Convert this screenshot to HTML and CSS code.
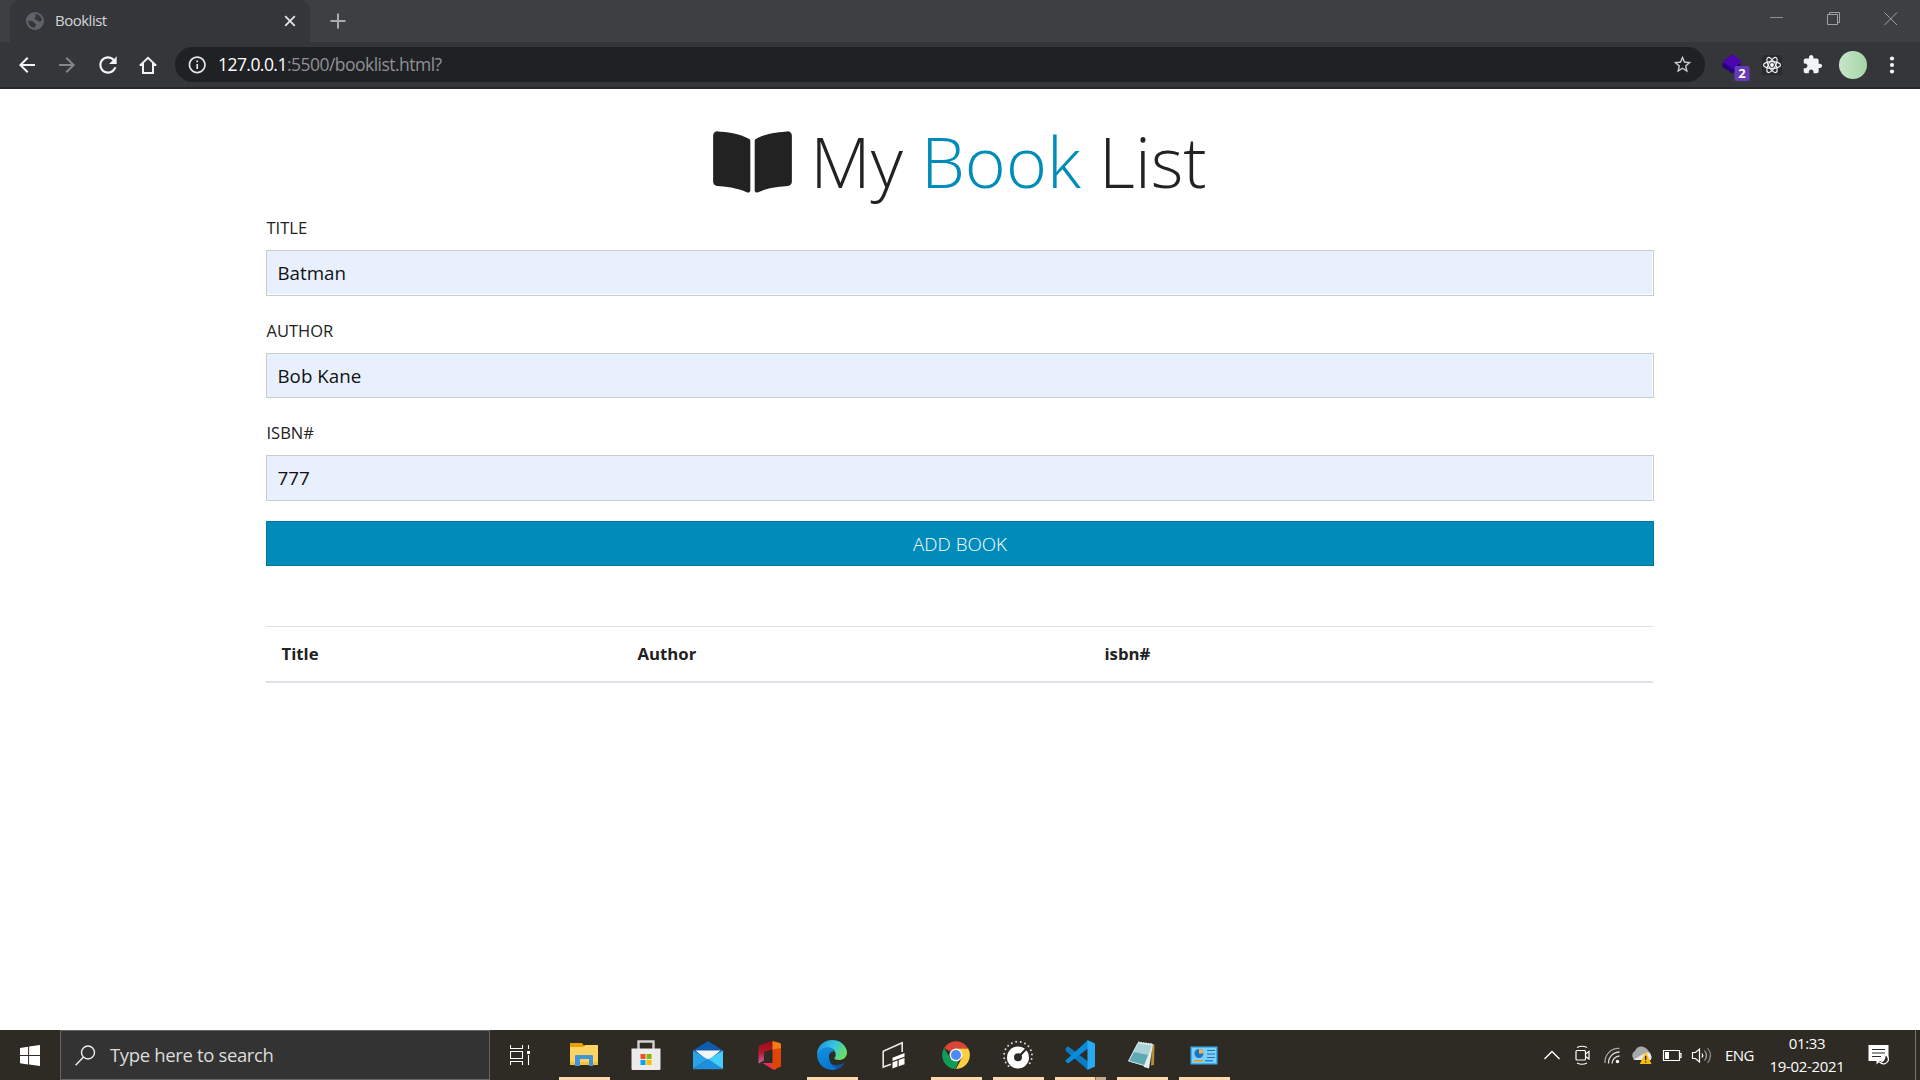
FILE: index.html
```html
<!DOCTYPE html>
<html lang="en">
<head>
<meta charset="utf-8">
<title>Booklist</title>
<link rel="stylesheet" href="styles.css">
</head>
<body>
<div class="screen">
  <header class="tabstrip">
    <div class="tab">
      <svg class="globe" width="18" height="18" viewBox="0 0 18 18"><circle cx="9" cy="9" r="9" fill="#5f6368"/><path d="M9 2c3.900 0 6.600 3 6.900 6.200-1.200 1-2.400 1.700-3.800 1-.8-.4-.6-1.300-1.600-1.400-1.500-.1-2.200-1-1.800-2.100.3-1 1.500-.8 1.300-1.900C9.900 3 9.300 2.600 9 2zM2.100 8.600c1.700.5 3.700.3 4.900 1 1 .6.800 1.500 1.900 1.800 1.300.3 1.500 1.200.8 2.100-.5.700-.9 1-1 2.400C4.900 15.700 2.100 12.700 2.100 8.600z" fill="#35363a"/></svg>
      <span class="tab-title">Booklist</span>
      <svg class="tab-close" width="12" height="12" viewBox="0 0 12 12"><path d="M1.200 1.200l9.600 9.600M10.800 1.200l-9.600 9.600" stroke="#dfe1e5" stroke-width="1.900"/></svg>
    </div>
    <svg class="newtab" width="16" height="16" viewBox="0 0 16 16"><path d="M8 .5v15M.5 8h15" stroke="#a9acaf" stroke-width="2"/></svg>
    <div class="winctl">
      <svg width="14" height="14" viewBox="0 0 14 14"><path d="M0 5.500h13" stroke="#8b8e90"/></svg>
      <svg width="14" height="14" viewBox="0 0 14 14"><path d="M.5 2.500h10v10H.5zM2.500 2.500v-2h10v10h-2" fill="none" stroke="#a0a3a5"/></svg>
      <svg width="14" height="14" viewBox="0 0 14 14"><path d="M.5.500l12.500 12.500M13 .5L.5 13" stroke="#a0a3a5"/></svg>
    </div>
  </header>
  <nav class="toolbar">
    <div class="navicons">
      <svg width="24" height="24" viewBox="0 0 24 24"><path fill="#f1f3f4" d="M20 11H7.830l5.590-5.590L12 4l-8 8 8 8 1.410-1.410L7.830 13H20z"/></svg>
      <svg width="24" height="24" viewBox="0 0 24 24"><path fill="#85868a" d="M12 4l-1.410 1.410L16.170 11H4v2h12.170l-5.580 5.590L12 20l8-8z"/></svg>
      <svg width="26" height="26" viewBox="0 0 24 24"><path fill="#f1f3f4" d="M17.650 6.350C16.200 4.900 14.210 4 12 4c-4.420 0-7.990 3.580-7.990 8s3.570 8 7.990 8c3.730 0 6.840-2.550 7.730-6h-2.080c-.82 2.330-3.040 4-5.650 4-3.310 0-6-2.690-6-6s2.690-6 6-6c1.660 0 3.140.69 4.220 1.780L13 11h7V4l-2.350 2.350z"/></svg>
      <svg class="home" width="24" height="24" viewBox="0 0 24 24"><path fill="none" stroke="#f1f3f4" stroke-width="2" d="M7 10v10h10V10M3.800 12.600L12 4.800l8.200 7.800M4.500 12H7M17 12h2.500"/></svg>
    </div>
    <div class="omnibox">
      <svg width="20" height="20" viewBox="2 2 20 20"><path fill="#e3e5e8" d="M11 7h2v2h-2zm0 4h2v6h-2zm1-9C6.480 2 2 6.480 2 12s4.480 10 10 10 10-4.480 10-10S17.520 2 12 2zm0 18c-4.410 0-8-3.590-8-8s3.590-8 8-8 8 3.590 8 8-3.590 8-8 8z" transform="translate(1.900 1.500) scale(.86)"/></svg>
      <span class="url"><b class="host">127.0.0.1</b><span class="path">:5500/booklist.html?</span></span>
      <svg class="star" width="21" height="21" viewBox="0 0 24 24"><path fill="#c9cccf" d="M22 9.240l-7.190-.62L12 2 9.190 8.630 2 9.240l5.460 4.730L5.820 21 12 17.270 18.180 21l-1.630-7.030L22 9.240zM12 15.400l-3.760 2.270 1-4.280-3.320-2.880 4.380-.38L12 6.100l1.710 4.040 4.380.38-3.320 2.880 1 4.280L12 15.400z"/></svg>
    </div>
    <div class="exts">
      <svg width="30" height="30" viewBox="0 0 30 30"><path fill="#25027e" d="M2.500 11.500L13 4.500l9 10-9.500 7L2.500 15z"/><path fill="#4c05ae" d="M12.500 2L22 9.500 12.500 17 2.500 9.500z"/><rect x="14.500" y="14" width="15" height="15" rx="2" fill="#673ab7"/><text x="22" y="26" class="badge">2</text></svg>
      <svg width="20" height="20" viewBox="0 0 20 20"><rect width="20" height="20" rx="2" fill="#2a2b2e"/><g fill="none" stroke="#f1f3f4" stroke-width="1.150"><ellipse cx="10" cy="10" rx="8.500" ry="3.400"/><ellipse cx="10" cy="10" rx="8.500" ry="3.400" transform="rotate(60 10 10)"/><ellipse cx="10" cy="10" rx="8.500" ry="3.400" transform="rotate(120 10 10)"/></g><circle cx="10" cy="10" r="1.900" fill="#fff"/></svg>
      <svg width="21" height="21" viewBox="0 0 24 24"><path fill="#f1f3f4" d="M20.500 11H19V7c0-1.100-.9-2-2-2h-4V3.500C13 2.120 11.880 1 10.500 1S8 2.120 8 3.500V5H4c-1.100 0-1.990.9-1.990 2v3.800H3.500c1.490 0 2.700 1.210 2.700 2.700s-1.210 2.700-2.700 2.700H2V20c0 1.100.9 2 2 2h3.800v-1.500c0-1.490 1.210-2.700 2.700-2.700s2.700 1.210 2.700 2.700V22H17c1.100 0 2-.9 2-2v-4h1.500c1.380 0 2.500-1.120 2.500-2.500S21.880 11 20.500 11z"/></svg>
      <span class="avatar"></span>
      <svg width="6" height="18" viewBox="0 0 6 18"><g fill="#f1f3f4"><circle cx="3" cy="2.500" r="2.100"/><circle cx="3" cy="9" r="2.100"/><circle cx="3" cy="15.500" r="2.100"/></g></svg>
    </div>
  </nav>

  <main class="page">
    <div class="container">
      <h1 class="brand"><svg class="book" width="79" height="70" viewBox="0 0 576 512"><path fill="#222" d="M542.220 32.050c-54.800 3.110-163.720 14.430-230.960 55.590-4.640 2.840-7.270 7.890-7.270 13.170v363.870c0 11.550 12.630 18.850 23.280 13.490 69.180-34.820 169.230-44.320 218.700-46.920 16.890-.89 30.020-14.430 30.020-30.660V62.750c.01-17.710-15.350-31.740-33.770-30.700zM264.730 87.640C197.500 46.480 88.580 35.170 33.780 32.050 15.360 31.010 0 45.040 0 62.750V400.600c0 16.240 13.130 29.780 30.020 30.660 49.490 2.600 149.590 12.110 218.770 46.950 10.620 5.350 23.210-1.940 23.210-13.460V100.630c0-5.290-2.620-10.140-7.270-12.990z"/></svg><span>My <span class="accent">Book</span> List</span></h1>
      <form class="form">
        <label class="label" for="title">Title</label>
        <input class="field" id="title" value="Batman">
        <label class="label" for="author">Author</label>
        <input class="field field-short" id="author" value="Bob Kane">
        <label class="label" for="isbn">ISBN#</label>
        <input class="field" id="isbn" value="777">
        <button class="submit" type="button">Add Book</button>
      </form>
      <div class="table">
        <span>Title</span><span>Author</span><span>isbn#</span>
      </div>
    </div>
  </main>

  <footer class="taskbar">
    <div class="start"><svg width="20" height="21" viewBox="0 0 20 21"><path fill="#fff" d="M0 2.900l8.100-1.100v8.300H0zM9.100 1.600L20 0v10.100H9.100zM0 11.100h8.100v8.300L0 18.200zM9.100 11.100H20V21L9.100 19.500z"/></svg></div>
    <div class="search">
      <svg width="21" height="21" viewBox="0 0 21 21"><circle cx="13" cy="7.500" r="6.500" fill="none" stroke="#f0f0f0" stroke-width="1.400"/><path d="M8.300 12.200L.6 20.300" stroke="#f0f0f0" stroke-width="1.400"/></svg>
      <span class="search-text">Type here to search</span>
    </div>
    <div class="cell"><svg width="21" height="20" viewBox="0 0 21 20"><g fill="none" stroke="#fff"><path d="M.5 0v3.500h12V0M.5 20v-3.500h12V20M.5 6.500h12v7H.5zM18.500 0v4M18.500 10v10" stroke-width="1.100"/></g><path fill="#fff" d="M17 6h3v3h-3z"/></svg></div>
    <div class="app running"><svg width="30" height="30" viewBox="0 0 30 30"><path fill="#e5a100" d="M1 3h12l2 2.500V10H1z"/><path fill="#fdd462" d="M1 7h13l2-2h13v20H1z"/><path fill="#f5c13d" d="M1 22h28v3H1z"/><path fill="#4095d9" d="M6 16a1 1 0 011-1h16a1.500 1.500 0 011 1v10h-4v-7h-9v7H6z"/></svg></div>
    <div class="app"><svg width="30" height="30" viewBox="0 0 30 30"><path fill="none" stroke="#d2d2d2" stroke-width="2.400" d="M7.500 9V1.500h15V9"/><path fill="#ececec" d="M.5 8.500h29V29a1 1 0 01-1 1h-27a1 1 0 01-1-1z"/><path fill="#f25022" d="M9.500 14h5v5h-5z"/><path fill="#7fba00" d="M15.500 14h5v5h-5z"/><path fill="#00a4ef" d="M9.500 20h5v5h-5z"/><path fill="#ffb900" d="M15.500 20h5v5h-5z"/></svg></div>
    <div class="app"><svg width="30" height="30" viewBox="0 0 30 30"><path fill="#0f5cae" d="M0 10.500L15 1l15 9.500V20H0z"/><path fill="#f4f4f4" d="M2.500 10.500h25L15 21z"/><path fill="#28a3e6" d="M0 10.500l15 9L0 29z"/><path fill="#45cdf6" d="M30 10.500L14 20l16 9z"/><path fill="#1f8edc" d="M0 29.200L15 18.800 30 29.200z"/></svg></div>
    <div class="app"><svg width="30" height="30" viewBox="0 0 30 30"><defs><linearGradient id="oa" x1="0" x2="0" y1="0" y2="1"><stop offset="0" stop-color="#9a0c14"/><stop offset=".5" stop-color="#b5182c"/><stop offset="1" stop-color="#c765a0"/></linearGradient></defs><path fill="url(#oa)" d="M3.500 7.500Q3.500 6 5 5.200L16 1.200 18.500 1v8L10 11.500q-1 .4-1 1.500v7.500L3.500 23.500z"/><path fill="#e8304e" d="M7.500 23H18l3 6.500h-3z"/><path fill="#f57c10" d="M17.500 1l7.500 2q1 .5 1 1.500V10h-8.500z"/><path fill="#e04408" d="M17.500 9.500L26 8v17.500q0 1-1 1.500l-6 2.500-1.500-.5z"/></svg></div>
    <div class="app running"><svg width="30" height="30" viewBox="0 0 30 30"><defs><linearGradient id="ea" x1="0" x2="1" y1=".2" y2=".6"><stop offset="0" stop-color="#1b8fd8"/><stop offset=".5" stop-color="#35c4e5"/><stop offset="1" stop-color="#6ce05a"/></linearGradient><linearGradient id="eb" x1="0" x2=".4" y1="0" y2="1"><stop offset="0" stop-color="#1590df"/><stop offset="1" stop-color="#0878d4"/></linearGradient></defs><path fill="#1255a5" d="M11 13c-3 10 6 15 16.500 10C23 32 8 33 4 20c0-5 3-8 7-7z"/><path fill="url(#eb)" d="M0 14c1-5 5-7.500 9-7.500 5 0 7.500 2.500 7.700 5.500-2-1-4.700 1-4.700 4.500 0 6 3.500 10.500 8 12.500C9 32 0 25 0 14z"/><path fill="url(#ea)" d="M0 14C.5 5.500 7 0 15 0c9 0 15 6.500 15 12.500 0 5-4 7.500-8 7.500-3 0-5-1-4.600-2 1.600-1.600 1.600-4 .7-6C15.500 5.500 4.500 5 0 14z"/></svg></div>
    <div class="app"><svg width="30" height="30" viewBox="0 0 30 30"><path fill="none" stroke="#e8e8e8" stroke-width="1.600" d="M12 24.200L4.200 27V11.200L23.200 2.800V12"/><path fill="#fff" d="M13.500 17.800L25.500 13v3.800l-12 4.200zM13.500 22.200l5-1.800v6.200l-5 2zM19.700 20l5.800-2v6.300l-5.800 2z"/></svg></div>
    <div class="app running"><svg width="30" height="30" viewBox="0 0 30 30"><path fill="#db4437" d="M15 15L3.100 8A14 14 0 0127.200 8.500H15z"/><path fill="#ffcd40" d="M15 8.500h12.300A14 14 0 0115 29l5.600-10.500z"/><path fill="#0f9d58" d="M3 7.900l6.400 10.400L15 21.500l2.800-.5L14.600 29A14 14 0 013 7.900z"/><circle cx="15" cy="15" r="6.500" fill="#f1f1f1"/><circle cx="15" cy="15" r="5" fill="#4c8bf5"/></svg></div>
    <div class="app running"><svg width="32" height="30" viewBox="0 0 32 30"><path d="M6.500 26A14 14 0 1125.500 26" fill="none" stroke="#d8d8d8" stroke-width="2" stroke-linecap="round" stroke-dasharray="0 4.500"/><circle cx="16" cy="17.500" r="11" fill="#fff"/><circle cx="16" cy="17.300" r="4" fill="#2e2a24"/><path d="M16.500 17l8-8.500" stroke="#2e2a24" stroke-width="2.200"/></svg></div>
    <div class="app running grouped"><svg width="30" height="30" viewBox="0 0 30 30"><path fill="#0b7cc4" d="M.5 9.300Q.3 8.500 1 8l1.400-1.200q.6-.4 1.300 0L23 21.500V30L.8 11z"/><path fill="#0a8bdc" d="M.5 20.500q-.2.700.5 1.300l1.400 1.200q.6.400 1.300 0L23 8.500V0z"/><path fill="#29a9f2" d="M22.500 0L30 3.500v23L22.500 30z"/></svg></div>
    <div class="app running"><svg width="30" height="30" viewBox="0 0 30 30"><path fill="#b58a38" d="M25 4l2.500.5L27 25l-3 .5z"/><path fill="#e6eeee" d="M11 2l15 2-4 24.500L17 27z"/><path fill="#a9d3d8" d="M10.500 3L25 5l-7.500 20.500L1.500 21z"/><path fill="#5fa9b4" d="M7 12l14 3-4 10L2 21z"/><path stroke="#e7ecec" stroke-width="2" stroke-dasharray="1.500 1" d="M11 2.500l14.500 2"/><path fill="none" stroke="#d0e6e8" d="M10.500 4L1.500 21 17 25.500"/></svg></div>
    <div class="app running"><svg width="30" height="30" viewBox="0 0 30 30"><path fill="#3faef0" d="M1.500 6.500h27v18h-27z"/><path fill="#7ed0fb" d="M3 8h24v15H3z"/><circle cx="10" cy="13.500" r="4.500" fill="#1c74c4"/><path fill="#f9b233" d="M10 13.500V9a4.500 4.500 0 014.500 4.500z"/><path stroke="#1970b8" stroke-width="1.200" d="M18 10.500h8M18 14h8M18 17.500h8"/><path stroke="#f09a1c" stroke-width="1.600" d="M5 20.800h9"/><path stroke="#1970b8" stroke-width="1.200" d="M16 20.800h8"/></svg></div>
    <div class="tray">
      <svg width="30" height="24" viewBox="0 0 30 24"><path d="M7.500 16L15 8.500 22.500 16" fill="none" stroke="#fff" stroke-width="1.400"/></svg>
      <svg width="30" height="24" viewBox="0 0 30 24"><g fill="none" stroke="#fff" stroke-width="1.200"><rect x="9" y="7.500" width="9.500" height="9.500" rx="1"/><path d="M18.500 11l3.500-2.500v7.500l-3.500-2.500M10 4.500q5-2.500 10 0M10 20q5 2.500 10 0"/></g></svg>
      <svg width="30" height="24" viewBox="0 0 30 24"><g fill="none" stroke="#ddd" stroke-width="1.300"><path d="M8 20A13.500 13.500 0 0122.500 5.500" opacity=".7"/><path d="M11.500 20.500A11 11 0 0122.500 9M15 20.500a8 8 0 017.500-7.500"/></g><circle cx="20.500" cy="18.500" r="1.700" fill="#fff"/></svg>
      <svg class="cloud" width="30" height="24" viewBox="0 0 30 24"><path fill="#a9a9a9" d="M9 17a5 5 0 010-9 7 7 0 0112-2l4 5-4 5z"/><path fill="#e8e8e8" d="M7 17l13-7.500a5 5 0 015 7.500z"/><path fill="#fbbc0d" d="M19.800 8.500L25.500 21H13.800z"/><path d="M19.700 13v4M19.700 18.200v1.300" stroke="#222" stroke-width="1.300"/></svg>
      <svg width="30" height="24" viewBox="0 0 30 24"><path fill="none" stroke="#fff" stroke-width="1.200" d="M6.500 7.500h16v10h-16zM22.500 10.500H24v4h-1.500"/><path fill="#fff" d="M8 9h4v7H8z"/></svg>
      <svg class="cloud" width="30" height="24" viewBox="0 0 30 24"><g fill="none" stroke="#fff" stroke-width="1.200"><path d="M6.500 9.500h3L13.500 6v13l-4-3.500h-3zM16 10.500q1.500 2 0 4"/><path d="M18.500 7.500q4 5 0 10" opacity=".6"/><path d="M21.500 5q6 7.500 0 15" opacity=".45"/></g></svg>
      <span class="lang">ENG</span>
      <div class="clock"><span class="time">01:33</span><span class="date">19-02-2021</span></div>
      <svg class="notes" width="22" height="22" viewBox="0 0 22 22"><path fill="#fff" d="M.5 1h20v16H12l-3.500 3.500V17h-8z"/><path stroke="#2e2a24" stroke-width="1.200" d="M4 5.500h13M4 9h13M4 12.500h9"/><path fill="#2e2a24" stroke="#fff" stroke-width="1.200" d="M17 10.500q4.500 2 3 6.500-3 5-8 1.500 5.500-1.500 5-8z"/></svg>
      <span class="peek"></span>
    </div>
  </footer>
</div>
</body>
</html>
```
FILE: styles.css
```css
* { box-sizing: border-box; }
body { margin: 0; background: #fff; color: #222; font-family: "Open Sans", "Noto Sans", sans-serif; }
svg { display: block; flex: none; }
.screen { display: flex; flex-direction: column; width: 1920px; height: 1080px; overflow: hidden; }

/* Browser chrome */
.tabstrip { display: flex; height: 42px; flex: none; background: #3c4043; }
.tab { display: flex; align-items: center; width: 300px; height: 42px; margin-left: 10px; padding: 0 14px 0 16px; background: #35363a; border-radius: 10px 10px 0 0; }
.tab-title { flex: 1; margin: -2px 0 0 11px; font-size: 15px; line-height: 20px; color: #d4d6d9; letter-spacing: -0.5px; }
.newtab { margin: 13px 0 0 20px; }
.winctl { display: flex; gap: 43px; margin: 12px 22px 0 auto; }
.toolbar { display: flex; align-items: center; height: 47px; flex: none; background: #35363a; border-bottom: 2px solid #27282b; }
.navicons { display: flex; align-items: center; gap: 16px; width: 175px; padding-left: 15px; }
.home { margin-left: -1px; }
.omnibox { display: flex; align-items: center; width: 1530px; height: 35px; padding: 0 12px; border-radius: 18px; background: #202124; }
.url { flex: 1; margin: -2px 0 0 11px; font-size: 17.5px; color: #9aa0a6; white-space: nowrap; }
.host { font-weight: 400; color: #fff; letter-spacing: -0.55px; }
.path { color: #8f9194; letter-spacing: -0.52px; }
.exts { display: flex; align-items: center; padding-left: 15px; }
.exts svg:nth-child(1) { margin: 4px 12px 0 0; }
.exts svg:nth-child(2) { margin-right: 20px; }
.exts svg:nth-child(3) { margin-right: 16px; }
.badge { font: 700 13px "Open Sans", sans-serif; fill: #fff; text-anchor: middle; }
.avatar { width: 28px; height: 28px; margin-right: 22px; border-radius: 50%; background: linear-gradient(90deg, #c8e6c9, #a5d6a7); }

/* Page */
.page { flex: 1; background: #fff; }
.container { width: 1388px; margin: 0 auto; padding-top: 30px; }
.brand { display: flex; justify-content: center; gap: 18px; margin: 0; height: 99px; font-size: 70px; font-weight: 300; line-height: 84px; letter-spacing: 0; }
.book { margin-top: 8px; }
.accent { color: #008cba; }
.form { display: flex; flex-direction: column; }
.label { height: 32px; padding-left: 0.5px; font-size: 16.5px; line-height: 20px; text-transform: uppercase; }
.field { height: 46px; margin: 0 0 25px; padding: 0 10px 2px 10.500px; border: 1px solid #ccc; border-radius: 0; background: #e8f0fe; box-shadow: inset -1px -1px #fff; color: #111; font: 400 18.75px "Open Sans", sans-serif; }
.field-short { height: 45px; padding-bottom: 0; box-shadow: inset -1px 0 #fff; }
#isbn { padding-bottom: 1px; box-shadow: inset -1px 0 #fff; }
.submit { height: 45px; margin-top: -5px; padding-bottom: 2px; border: 1px solid #0079a1; background: #008cba; color: #fff; font: 300 18.75px "Open Sans", sans-serif; text-transform: uppercase; }
.table { display: grid; grid-template-columns: 356px 467px 1fr; width: 1387px; height: 57px; margin-top: 60px; padding-left: 15.500px; border-top: 1px solid #dee2e6; border-bottom: 2px solid #dee2e6; font-size: 16.75px; font-weight: 700; line-height: 54px; }

/* Taskbar */
.taskbar { display: flex; height: 50px; flex: none; background: #2e2a24; color: #fff; }
.start { width: 60px; padding: 15px 0 0 20px; }
.search { display: flex; align-items: center; width: 430px; padding-left: 14px; border: 1px solid #656565; background: #333; }
.search-text { margin: -2px 0 0 14px; font-size: 18.5px; color: #dcdcdc; letter-spacing: -0.35px; }
.cell { width: 63px; padding: 15px 0 0 20px; }
.app { display: flex; flex: none; justify-content: center; width: 62px; padding-top: 10px; }
.running { background: linear-gradient(#ffd8ad, #ffd8ad) 6px 47px / 51px 3px no-repeat; }
.grouped { background: linear-gradient(90deg, #ffd8ad 40px, #8b7560 40px 41px, #c8ab8a 41px) 6px 47px / 51px 3px no-repeat; }
.tray { display: flex; align-items: center; margin-left: auto; width: 383px; }
.cloud { margin: 0 1px 0 -1px; }
.lang { width: 40px; padding-left: 8px; font-size: 15px; letter-spacing: -0.6px; }
.clock { display: flex; flex-direction: column; width: 100px; text-align: center; font-size: 15px; line-height: 23px; letter-spacing: -0.35px; }
.notes { margin-left: 11px; }
.peek { width: 1px; height: 50px; margin-left: 25px; background: #77746f; }
```
